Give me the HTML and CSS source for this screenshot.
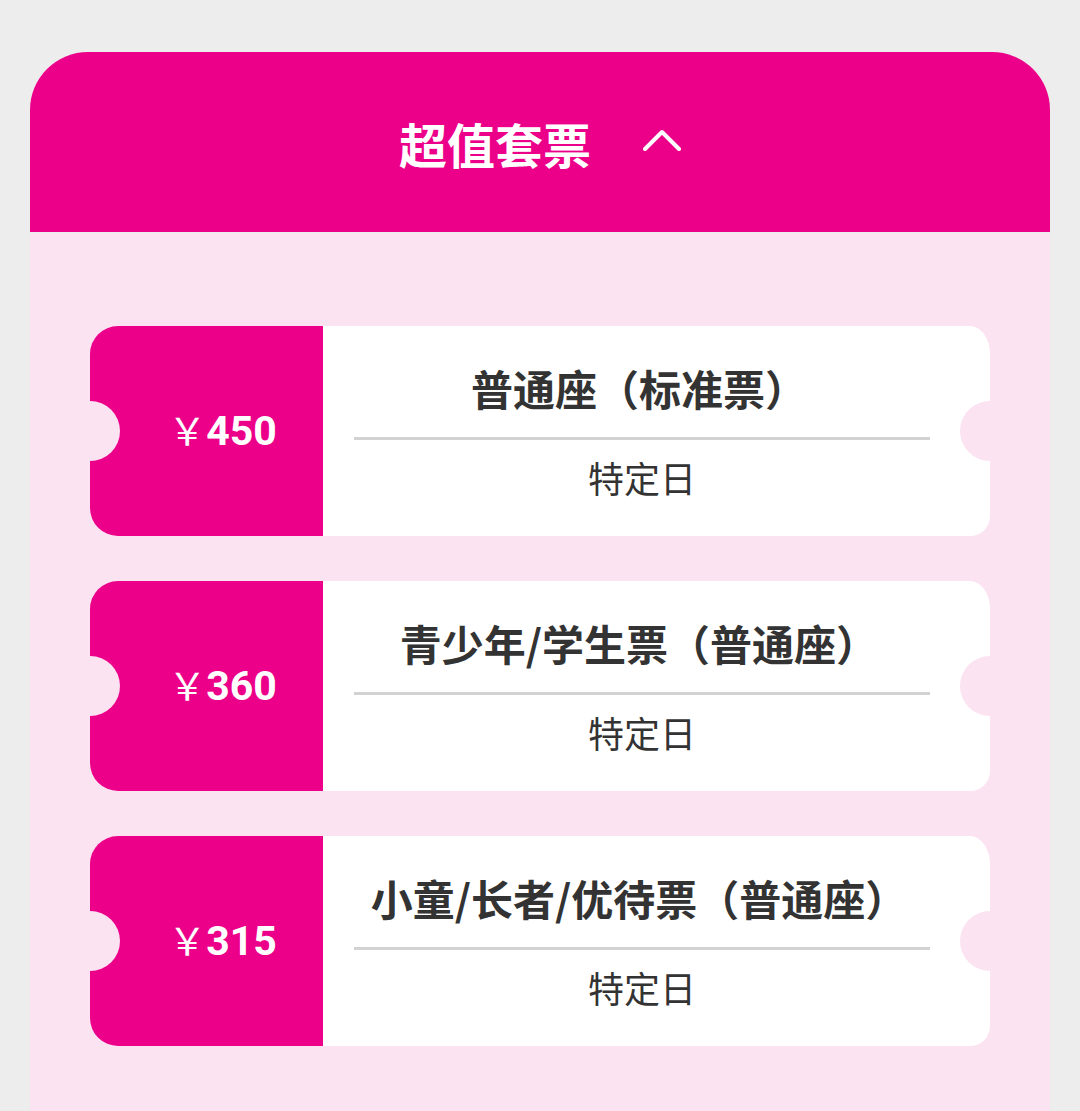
FILE: index.html
```html
<!DOCTYPE html>
<html lang="zh-CN">
<head>
<meta charset="utf-8">
<title>超值套票</title>
<link rel="stylesheet" href="styles.css">
</head>
<body>
<div class="card">
  <div class="card-header">
    <span class="card-title">超值套票</span>
    <svg class="chevron" width="38" height="22" viewBox="0 0 38 22"><polyline points="2,20 19,3 36,20" fill="none" stroke="#fff" stroke-width="4" stroke-linecap="round" stroke-linejoin="round"/></svg>
  </div>
  <div class="card-body">
    <div class="ticket">
      <div class="ticket-price"><span class="price"><span class="yen">￥</span><span class="amount">450</span></span></div>
      <div class="ticket-info">
        <div class="ticket-name">普通座（标准票）</div>
        <div class="ticket-divider"></div>
        <div class="ticket-date">特定日</div>
      </div>
    </div>
    <div class="ticket">
      <div class="ticket-price"><span class="price"><span class="yen">￥</span><span class="amount">360</span></span></div>
      <div class="ticket-info">
        <div class="ticket-name">青少年/学生票（普通座）</div>
        <div class="ticket-divider"></div>
        <div class="ticket-date">特定日</div>
      </div>
    </div>
    <div class="ticket">
      <div class="ticket-price"><span class="price"><span class="yen">￥</span><span class="amount">315</span></span></div>
      <div class="ticket-info">
        <div class="ticket-name">小童/长者/优待票（普通座）</div>
        <div class="ticket-divider"></div>
        <div class="ticket-date">特定日</div>
      </div>
    </div>
  </div>
</div>
</body>
</html>
```
FILE: styles.css
```css
html, body {
  margin: 0;
  padding: 0;
  background: #ededed;
  font-family: "Noto Sans CJK SC", "Noto Sans", sans-serif;
  overflow: hidden;
}

.card {
  margin: 52px 30px 0 30px;
}

.card-header {
  height: 180px;
  background: #ec008a;
  border-radius: 58px 58px 0 0;
  display: flex;
  align-items: center;
  justify-content: center;
  padding-top: 2px;
  box-sizing: border-box;
}

.card-title {
  color: #fff;
  font-size: 48px;
  font-weight: 700;
  line-height: 1;
}

.chevron {
  margin-left: 52px;
  margin-top: -6px;
}

.card-body {
  background: #fbe3f1;
  margin-top: 1px;
  padding: 93px 60px 200px 60px;
  display: flex;
  flex-direction: column;
  gap: 45px;
}

.ticket {
  position: relative;
  display: flex;
  height: 210px;
}

.ticket-price {
  width: 233px;
  flex: none;
  background: #ec008a;
  border-radius: 28px 0 0 28px;
  color: #fff;
  display: flex;
  align-items: center;
  justify-content: center;
  padding-left: 32px;
  box-sizing: border-box;
}

.price {
  font-family: Roboto, "Noto Sans CJK SC", sans-serif;
  font-size: 41px;
  line-height: 1;
}

.yen {
  font-family: "Noto Sans CJK SC", sans-serif;
  font-weight: 400;
  font-size: 38px;
}

.amount {
  font-weight: 700;
}

.ticket-info {
  flex: 1;
  background: #fff;
  border-radius: 0 20px 20px 0 / 0 28px 20px 0;
  padding: 35px 60px 0 31px;
  display: flex;
  flex-direction: column;
  align-items: stretch;
  color: #333;
}

.ticket::before,
.ticket::after {
  content: "";
  position: absolute;
  top: 75px;
  width: 60px;
  height: 60px;
  border-radius: 50%;
  background: #fbe3f1;
}

.ticket::before {
  left: -30px;
}

.ticket::after {
  right: -30px;
}

.ticket-name {
  font-size: 42px;
  font-weight: 700;
  line-height: 54px;
  text-align: center;
  margin-left: -6px;
  white-space: nowrap;
}

.ticket-divider {
  height: 3px;
  background: #d2d2d2;
  margin-top: 22px;
}

.ticket-date {
  font-size: 36px;
  font-weight: 400;
  line-height: 50px;
  text-align: center;
  margin-top: 12px;
}
```
